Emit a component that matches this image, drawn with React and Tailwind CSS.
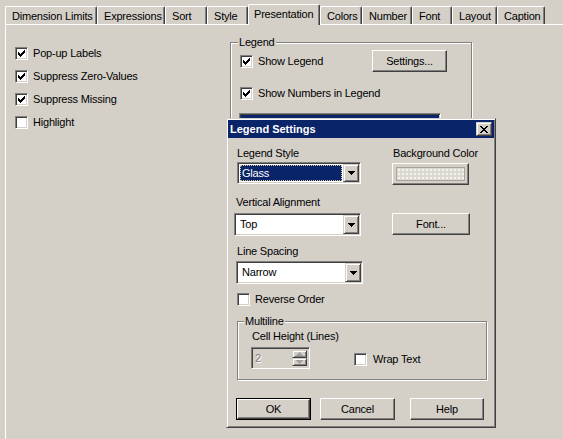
import React from 'react'

const tabs = [
  ['Dimension Limits', 'w-[92px]'],
  ['Expressions', 'w-[68px]'],
  ['Sort', 'w-[42px]'],
  ['Style', 'w-[41px]'],
  ['Presentation', 'w-[72px]', true],
  ['Colors', 'w-[42px]'],
  ['Number', 'w-[50px]'],
  ['Font', 'w-[40px]'],
  ['Layout', 'w-[45px]'],
  ['Caption', 'w-[48px]'],
]

// classic 3d bevels
const raised =
  'bg-[#d4d0c8] border border-t-white border-l-white border-r-[#404040] border-b-[#404040] shadow-[inset_-1px_-1px_0_#808080]'
const raisedSmall =
  'bg-[#d4d0c8] border border-t-[#d4d0c8] border-l-[#d4d0c8] border-r-[#404040] border-b-[#404040] shadow-[inset_1px_1px_0_#fff,inset_-1px_-1px_0_#808080]'
const sunken =
  'border border-t-[#808080] border-l-[#808080] border-r-white border-b-white shadow-[inset_1px_1px_0_#404040,inset_-1px_-1px_0_#d4d0c8]'
const etched = 'border border-[#808080] shadow-[inset_1px_1px_0_#fff,1px_1px_0_#fff]'

function CheckMark() {
  return (
    <svg width="7" height="7" viewBox="0 0 7 7" shapeRendering="crispEdges">
      <rect x="6" y="0" width="1" height="1" />
      <rect x="5" y="1" width="2" height="1" />
      <rect x="0" y="2" width="1" height="1" />
      <rect x="4" y="2" width="3" height="1" />
      <rect x="0" y="3" width="2" height="1" />
      <rect x="3" y="3" width="3" height="1" />
      <rect x="0" y="4" width="5" height="1" />
      <rect x="1" y="5" width="3" height="1" />
      <rect x="2" y="6" width="1" height="1" />
    </svg>
  )
}

function Check({ checked }) {
  return (
    <span className={`flex h-[13px] w-[13px] shrink-0 items-center justify-center bg-white ${sunken}`}>
      {checked && <CheckMark />}
    </span>
  )
}

function CheckRow({ label, checked, className = '' }) {
  return (
    <div className={`flex items-center gap-[5px] ${className}`}>
      <Check checked={checked} />
      <span>{label}</span>
    </div>
  )
}

function Button({ children, className = '', isDefault }) {
  if (isDefault) {
    return (
      <div className={`border border-black ${className}`}>
        <div className={`flex h-full items-center justify-center ${raised}`}>{children}</div>
      </div>
    )
  }
  return <div className={`flex items-center justify-center ${raised} ${className}`}>{children}</div>
}

function Arrow({ color = '#000', up }) {
  return (
    <svg width="7" height="4" viewBox="0 0 7 4" shapeRendering="crispEdges" fill={color}>
      {up ? (
        <>
          <rect x="3" y="0" width="1" height="1" />
          <rect x="2" y="1" width="3" height="1" />
          <rect x="1" y="2" width="5" height="1" />
          <rect x="0" y="3" width="7" height="1" />
        </>
      ) : (
        <>
          <rect x="0" y="0" width="7" height="1" />
          <rect x="1" y="1" width="5" height="1" />
          <rect x="2" y="2" width="3" height="1" />
          <rect x="3" y="3" width="1" height="1" />
        </>
      )}
    </svg>
  )
}

function Combo({ value, focused, className = '' }) {
  return (
    <div className={`flex bg-white p-px ${sunken} ${className}`}>
      <div className="flex flex-1 p-px">
        {focused ? (
          <span className="flex flex-1 items-center bg-[#0a246a] pl-[2px] text-white outline-1 -outline-offset-1 outline-dotted outline-[#d8c890]">
            {value}
          </span>
        ) : (
          <span className="flex flex-1 items-center pl-[3px]">{value}</span>
        )}
      </div>
      <div className={`flex w-[16px] items-center justify-center ${raisedSmall}`}>
        <Arrow />
      </div>
    </div>
  )
}

function CloseGlyph() {
  return (
    <svg width="8" height="7" viewBox="0 0 8 7" shapeRendering="crispEdges">
      <rect x="0" y="0" width="2" height="1" />
      <rect x="6" y="0" width="2" height="1" />
      <rect x="1" y="1" width="2" height="1" />
      <rect x="5" y="1" width="2" height="1" />
      <rect x="2" y="2" width="4" height="1" />
      <rect x="3" y="3" width="2" height="1" />
      <rect x="2" y="4" width="4" height="1" />
      <rect x="1" y="5" width="2" height="1" />
      <rect x="5" y="5" width="2" height="1" />
      <rect x="0" y="6" width="2" height="1" />
      <rect x="6" y="6" width="2" height="1" />
    </svg>
  )
}

function LegendSettings() {
  return (
    <div className="absolute left-[226px] top-[118px] flex h-[310px] w-[270px] flex-col border border-t-[#d4d0c8] border-l-[#d4d0c8] border-r-[#404040] border-b-[#404040] bg-[#d4d0c8] p-px shadow-[inset_1px_1px_0_#fff,inset_-1px_-1px_0_#808080]">
      <div className="flex h-[18px] shrink-0 items-center justify-between bg-[#0a246a] pl-[2px] pr-[2px] font-bold tracking-normal text-white">
        <span>Legend Settings</span>
        <div className={`flex h-[14px] w-[16px] items-center justify-center ${raisedSmall}`}>
          <CloseGlyph />
        </div>
      </div>

      <div className="mt-[9px] flex">
        <div className="flex w-[164px] flex-col">
          <span className="ml-[9px]">Legend Style</span>
          <Combo value="Glass" focused className="ml-[9px] mt-[2px] h-[22px] w-[124px]" />
        </div>
        <div className="flex flex-col">
          <span className="ml-px">Background Color</span>
          <div className={`mt-[3px] flex h-[22px] w-[77px] p-[3px] ${raised}`}>
            <div className="flex-1 border border-[#a8a49c] bg-[#dcd9d2] bg-[radial-gradient(#f4f2ee_0.9px,transparent_0.9px)] bg-[length:4px_4px]" />
          </div>
        </div>
      </div>

      <div className="mt-[11px] flex">
        <div className="flex w-[164px] flex-col">
          <span className="ml-[8px]">Vertical Alignment</span>
          <Combo value="Top" className="ml-[6px] mt-[4px] h-[23px] w-[127px]" />
        </div>
        <Button className="mt-[17px] h-[22px] w-[78px]">Font...</Button>
      </div>

      <span className="ml-[9px] mt-[9px]">Line Spacing</span>
      <Combo value="Narrow" className="ml-[8px] mt-[3px] h-[23px] w-[127px]" />

      <CheckRow label="Reverse Order" className="ml-[9px] mt-[9px] h-[13px]" />

      <div className={`relative ml-[9px] mt-[15px] h-[59px] w-[250px] pl-[13px] pt-[8px] ${etched}`}>
        <span className="absolute -top-[7px] left-[6px] bg-[#d4d0c8] px-px">Multiline</span>
        <span className="ml-px">Cell Height (Lines)</span>
        <div className="mt-[4px] flex items-center">
          <div className={`flex h-[22px] w-[59px] bg-[#d4d0c8] p-[2px] ${sunken}`}>
            <span className="flex flex-1 items-center pl-px text-[#808080] [text-shadow:1px_1px_0_#fff]">2</span>
            <div className="flex w-[15px] flex-col">
              <div className={`flex flex-1 items-center justify-center ${raisedSmall}`}>
                <Arrow up color="#a0a0a0" />
              </div>
              <div className={`flex flex-1 items-center justify-center ${raisedSmall}`}>
                <Arrow color="#a0a0a0" />
              </div>
            </div>
          </div>
          <CheckRow label="Wrap Text" className="ml-[44px] mt-[3px] gap-[6px]" />
        </div>
      </div>

      <div className="mt-[18px] flex">
        <Button isDefault className="ml-[8px] h-[22px] w-[75px]">OK</Button>
        <Button className="ml-[9px] h-[22px] w-[75px]">Cancel</Button>
        <Button className="ml-[15px] h-[22px] w-[74px]">Help</Button>
      </div>
    </div>
  )
}

export default function App() {
  return (
    <div className="relative h-[439px] w-[563px] overflow-hidden bg-[#d4d0c8] font-['Liberation_Sans',Arial,sans-serif] text-[11px] leading-[13px] tracking-[-0.2px] text-black">
      <div className="flex h-[24px] items-end pl-[5px]">
        {tabs.map(([label, width, active]) =>
          active ? (
            <div
              key={label}
              className={`relative z-10 -mb-px h-[21px] shrink-0 rounded-t-[2px] border-l border-r border-t border-l-white border-r-[#404040] border-t-white bg-[#d4d0c8] pl-[5px] pt-[3px] shadow-[inset_-1px_0_0_#808080] ${width}`}
            >
              {label}
            </div>
          ) : (
            <div
              key={label}
              className={`h-[18px] shrink-0 rounded-t-[2px] border-l border-r border-t border-l-white border-r-[#404040] border-t-white pl-[6px] pt-[3px] shadow-[inset_-1px_0_0_#808080] ${width}`}
            >
              {label}
            </div>
          )
        )}
      </div>

      <div className="ml-[5px] flex h-[420px] items-start border-l border-t border-white pl-[9px] pt-[17px]">
        <div className="flex w-[215px] flex-col">
          <CheckRow label="Pop-up Labels" checked className="h-[23px]" />
          <CheckRow label="Suppress Zero-Values" checked className="h-[23px]" />
          <CheckRow label="Suppress Missing" checked className="h-[23px]" />
          <CheckRow label="Highlight" className="h-[23px]" />
        </div>

        <div className={`relative flex h-[200px] w-[242px] flex-col pt-[7px] ${etched}`}>
          <span className="absolute -top-[7px] left-[7px] bg-[#d4d0c8] px-px">Legend</span>
          <div className="flex h-[22px] items-center pl-[9px]">
            <CheckRow label="Show Legend" checked />
            <Button className="ml-auto mr-[24px] h-[22px] w-[75px]">Settings...</Button>
          </div>
          <CheckRow label="Show Numbers in Legend" checked className="ml-[9px] mt-[10px] h-[22px]" />
          <div className={`ml-[8px] mt-[9px] h-[20px] w-[202px] bg-[#0a246a] ${sunken}`} />
        </div>
      </div>

      <LegendSettings />
    </div>
  )
}
